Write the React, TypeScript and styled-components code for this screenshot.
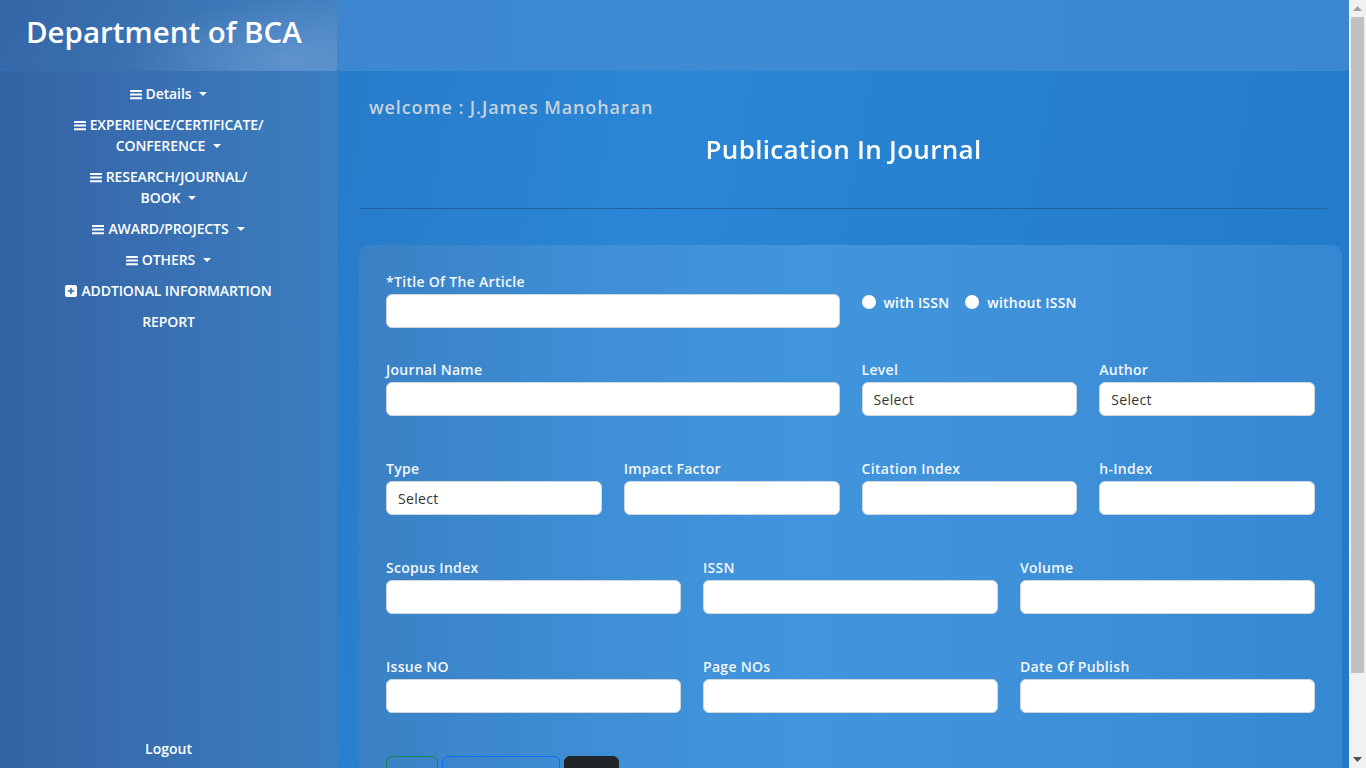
import React from "react";
import styled, { createGlobalStyle } from "styled-components";

const GlobalStyle = createGlobalStyle`
  html, body { margin: 0; padding: 0; height: 100%; overflow: hidden; }
  body {
    font-family: "Open Sans", "Liberation Sans", sans-serif;
    background: #2474c2;
    color: #fff;
  }
  * { box-sizing: border-box; }
`;

const Viewport = styled.div`
  display: flex;
  height: 100vh;
  width: 100vw;
`;

const Scroller = styled.div`
  flex: 1;
  min-width: 0;
  height: 100vh;
  overflow-y: auto;
  scrollbar-width: none;
  &::-webkit-scrollbar { display: none; }
`;

const ScrollGutter = styled.div`
  width: 17px;
  flex: none;
  height: 100vh;
  background: #f1f1f1;
  display: flex;
  flex-direction: column;
  align-items: center;
`;

const ScrollArrow = styled.div`
  height: 17px;
  width: 17px;
  display: flex;
  align-items: center;
  justify-content: center;
  flex: none;
`;

const ScrollThumb = styled.div`
  width: 13px;
  height: 656px;
  background: #c1c1c1;
  flex: none;
`;

const ScrollSpacer = styled.div`
  flex: 1;
`;

const Page = styled.div`
  min-height: 100%;
  background: linear-gradient(100deg, #2470bc 0%, #2a86d6 45%, #2279c9 100%);
`;

const Header = styled.header`
  height: 71px;
  display: flex;
  align-items: stretch;
  border-radius: 0 0 4px 4px;
  background: linear-gradient(90deg, #3c82ca 0%, #3e89d3 40%, #3d8ad4 75%, #3b87d1 100%);
  overflow: hidden;
`;

const Brand = styled.div`
  width: 337px;
  display: flex;
  align-items: center;
  padding: 0 0 8px 26px;
  border-radius: 0 0 4px 4px;
  background:
    radial-gradient(ellipse 160px 60px at 290px 60px, rgba(120, 165, 215, 0.5), rgba(120, 165, 215, 0) 100%),
    linear-gradient(120deg, #3465a6 0%, #3a72b2 45%, #4886c5 100%);
  font-size: 29.5px;
  font-weight: 600;
  color: #fff;
  white-space: nowrap;
`;

const HeaderFill = styled.div`
  flex: 1;
`;

const Body = styled.div`
  display: flex;
  align-items: flex-start;
`;

const Sidebar = styled.aside`
  position: sticky;
  top: 71px;
  width: 337px;
  flex: none;
  height: calc(100vh - 71px);
  background: linear-gradient(90deg, #3463a4 0%, #386fb1 45%, #3b7fc0 100%);
  display: flex;
  flex-direction: column;
  align-items: center;
  padding: 12px 0 8px;
`;

const NavList = styled.nav`
  display: flex;
  flex-direction: column;
  align-items: center;
  gap: 9.6px;
`;

const NavItem = styled.a<{ $upper?: boolean }>`
  display: block;
  text-align: center;
  font-size: 14px;
  font-weight: 600;
  line-height: 21.3px;
  color: #fff;
  text-decoration: none;
  text-transform: ${(p) => (p.$upper ? "uppercase" : "none")};
  letter-spacing: -0.1px;
`;

const Caret = styled.span`
  display: inline-block;
  width: 0;
  height: 0;
  margin-left: 8px;
  vertical-align: 3px;
  border-top: 4.5px solid #fff;
  border-left: 4.5px solid transparent;
  border-right: 4.5px solid transparent;
`;

const IconWrap = styled.span`
  display: inline-block;
  margin-right: 4px;
  vertical-align: -1px;
  line-height: 0;
  svg { display: block; }
`;

const Logout = styled.a`
  margin-top: auto;
  font-size: 14px;
  font-weight: 600;
  color: #fff;
  line-height: 22px;
  text-decoration: none;
`;

const Main = styled.main`
  flex: 1;
  min-width: 0;
  padding: 24px 7px 38px 22px;
`;

const Welcome = styled.div`
  padding-left: 10px;
  font-size: 18px;
  font-weight: 600;
  line-height: 24px;
  letter-spacing: 0.9px;
  color: #c7d1db;
`;

const Title = styled.h1`
  margin: 13px 0 0;
  text-align: center;
  font-size: 26px;
  font-weight: 600;
  line-height: 34px;
  letter-spacing: 0.3px;
  color: #fff;
  transform: translateX(-7px);
`;

const Rule = styled.hr`
  margin: 42px 15px 36px 0;
  border: 0;
  height: 1px;
  background: #24609e;
`;

const Card = styled.section`
  border-radius: 10px;
  padding: 29px 27px 27px;
  background: linear-gradient(90deg, #3a80c4 0%, #3f8fd6 25%, #4195dc 45%, #3e91d9 70%, #3788d2 100%);
`;

const Row = styled.div<{ $cols: number; $top: number }>`
  display: grid;
  grid-template-columns: repeat(${(p) => p.$cols}, 1fr);
  column-gap: 22px;
  margin-top: ${(p) => p.$top}px;
`;

const Field = styled.div<{ $span?: number }>`
  display: flex;
  flex-direction: column;
  grid-column: span ${(p) => p.$span || 1};
`;

const Label = styled.label`
  font-size: 14px;
  font-weight: 600;
  line-height: 16px;
  margin-bottom: 4px;
  color: #f3f7fb;
  letter-spacing: 0.3px;
`;

const Input = styled.input`
  height: 34px;
  width: 100%;
  border: 1px solid #cfd6de;
  border-radius: 6px;
  background: #fff;
  padding: 0 12px;
  font-family: inherit;
  font-size: 14px;
  outline: none;
`;

const Select = styled.select`
  height: 34px;
  width: 100%;
  border: 1px solid #cfd6de;
  border-radius: 6px;
  background: #fff;
  padding: 0 11px;
  font-family: inherit;
  font-size: 14px;
  letter-spacing: 0.3px;
  color: #333;
  appearance: none;
  -webkit-appearance: none;
  outline: none;
`;

const RadioGroup = styled.div`
  grid-column: span 2;
  display: flex;
  align-items: center;
  gap: 16px;
  padding-top: 22px;
  height: 34px;
`;

const RadioLabel = styled.label`
  display: flex;
  align-items: center;
  gap: 8px;
  font-size: 14px;
  font-weight: 600;
  color: #fff;
  letter-spacing: 0.2px;
`;

const Radio = styled.input`
  appearance: none;
  -webkit-appearance: none;
  margin: 0;
  width: 14px;
  height: 14px;
  border-radius: 50%;
  background: #fff;
  border: none;
`;

const Buttons = styled.div`
  display: flex;
  gap: 4px;
  margin-top: 43px;
`;

type Variant = "green" | "blue" | "dark";
const btnColor: Record<Variant, string> = { green: "#198754", blue: "#0d6efd", dark: "#212529" };

const Btn = styled.button<{ $variant: Variant; $pad: number }>`
  height: 40px;
  padding: 16px ${(p) => p.$pad}px 0;
  border-radius: 6px;
  font-family: inherit;
  font-size: 15px;
  line-height: 22px;
  border: 1px solid ${(p) => btnColor[p.$variant]};
  background: ${(p) => (p.$variant === "dark" ? "#212529" : "transparent")};
  color: ${(p) => (p.$variant === "dark" ? "#fff" : btnColor[p.$variant])};
`;

const Bars = () => (
  <IconWrap>
    <svg width="12" height="11" viewBox="0 0 12 11">
      <rect x="0" y="1" width="12" height="2" rx="0.5" fill="#fff" />
      <rect x="0" y="4.6" width="12" height="2" rx="0.5" fill="#fff" />
      <rect x="0" y="8.2" width="12" height="2" rx="0.5" fill="#fff" />
    </svg>
  </IconWrap>
);

const PlusSquare = () => (
  <IconWrap>
    <svg width="12" height="12" viewBox="0 0 12 12">
      <rect x="0" y="0" width="12" height="12" rx="2" fill="#fff" />
      <rect x="5.2" y="2.8" width="1.6" height="6.4" fill="#3a6db0" />
      <rect x="2.8" y="5.2" width="6.4" height="1.6" fill="#3a6db0" />
    </svg>
  </IconWrap>
);

const menu: { lines: string[]; caret: boolean; upper: boolean }[] = [
  { lines: ["Details"], caret: true, upper: false },
  { lines: ["EXPERIENCE/CERTIFICATE/", "CONFERENCE"], caret: true, upper: true },
  { lines: ["RESEARCH/JOURNAL/", "BOOK"], caret: true, upper: true },
  { lines: ["AWARD/PROJECTS"], caret: true, upper: true },
  { lines: ["OTHERS"], caret: true, upper: true },
];

export default function App() {
  return (
    <>
      <GlobalStyle />
      <Viewport>
        <Scroller>
          <Page>
            <Header>
              <Brand>Department of BCA</Brand>
              <HeaderFill />
            </Header>
            <Body>
              <Sidebar>
                <NavList>
                  {menu.map((m, i) => (
                    <NavItem key={i} href="#" $upper={m.upper}>
                      <Bars />
                      {m.lines.map((l, j) => (
                        <React.Fragment key={j}>
                          {j > 0 && <br />}
                          {l}
                        </React.Fragment>
                      ))}
                      {m.caret && <Caret />}
                    </NavItem>
                  ))}
                  <NavItem href="#" $upper>
                    <PlusSquare />
                    ADDTIONAL INFORMARTION
                  </NavItem>
                  <NavItem href="#" $upper>
                    REPORT
                  </NavItem>
                </NavList>
                <Logout href="#">Logout</Logout>
              </Sidebar>
              <Main>
                <Welcome>welcome : J.James Manoharan</Welcome>
                <Title>Publication In Journal</Title>
                <Rule />
                <Card>
                  <Row $cols={4} $top={0}>
                    <Field $span={2}>
                      <Label>*Title Of The Article</Label>
                      <Input type="text" />
                    </Field>
                    <RadioGroup>
                      <RadioLabel>
                        <Radio type="radio" name="issn" />
                        with ISSN
                      </RadioLabel>
                      <RadioLabel>
                        <Radio type="radio" name="issn" />
                        without ISSN
                      </RadioLabel>
                    </RadioGroup>
                  </Row>
                  <Row $cols={4} $top={34}>
                    <Field $span={2}>
                      <Label>Journal Name</Label>
                      <Input type="text" />
                    </Field>
                    <Field>
                      <Label>Level</Label>
                      <Select defaultValue="">
                        <option value="">Select</option>
                      </Select>
                    </Field>
                    <Field>
                      <Label>Author</Label>
                      <Select defaultValue="">
                        <option value="">Select</option>
                      </Select>
                    </Field>
                  </Row>
                  <Row $cols={4} $top={45}>
                    <Field>
                      <Label>Type</Label>
                      <Select defaultValue="">
                        <option value="">Select</option>
                      </Select>
                    </Field>
                    <Field>
                      <Label>Impact Factor</Label>
                      <Input type="text" />
                    </Field>
                    <Field>
                      <Label>Citation Index</Label>
                      <Input type="text" />
                    </Field>
                    <Field>
                      <Label>h-Index</Label>
                      <Input type="text" />
                    </Field>
                  </Row>
                  <Row $cols={3} $top={45}>
                    <Field>
                      <Label>Scopus Index</Label>
                      <Input type="text" />
                    </Field>
                    <Field>
                      <Label>ISSN</Label>
                      <Input type="text" />
                    </Field>
                    <Field>
                      <Label>Volume</Label>
                      <Input type="text" />
                    </Field>
                  </Row>
                  <Row $cols={3} $top={45}>
                    <Field>
                      <Label>Issue NO</Label>
                      <Input type="text" />
                    </Field>
                    <Field>
                      <Label>Page NOs</Label>
                      <Input type="text" />
                    </Field>
                    <Field>
                      <Label>Date Of Publish</Label>
                      <Input type="text" />
                    </Field>
                  </Row>
                  <Buttons>
                    <Btn $variant="green" $pad={11}>Add</Btn>
                    <Btn $variant="blue" $pad={16}>View Details</Btn>
                    <Btn $variant="dark" $pad={10}>Back</Btn>
                  </Buttons>
                </Card>
              </Main>
            </Body>
          </Page>
        </Scroller>
        <ScrollGutter>
          <ScrollArrow>
            <svg width="9" height="5" viewBox="0 0 9 5">
              <path d="M0 5 L4.5 0 L9 5 Z" fill="#a3a3a3" />
            </svg>
          </ScrollArrow>
          <ScrollThumb />
          <ScrollSpacer />
          <ScrollArrow>
            <svg width="9" height="5" viewBox="0 0 9 5">
              <path d="M0 0 L4.5 5 L9 0 Z" fill="#505050" />
            </svg>
          </ScrollArrow>
        </ScrollGutter>
      </Viewport>
    </>
  );
}
